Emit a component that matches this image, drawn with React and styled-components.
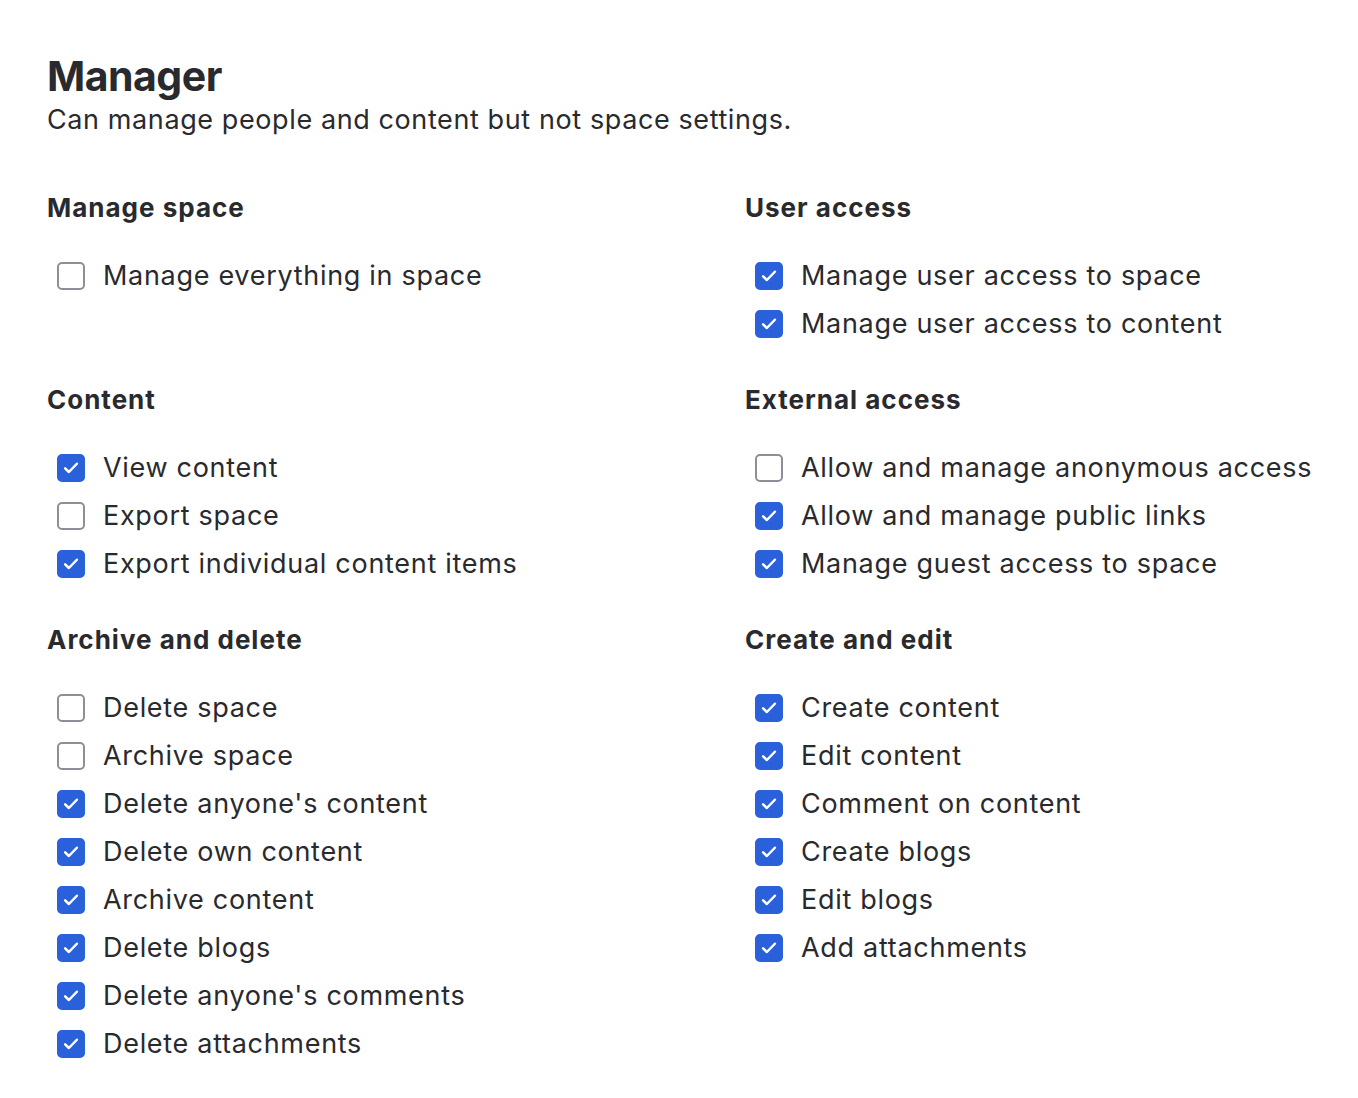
import React from 'react'
import styled, { createGlobalStyle } from 'styled-components'

const GlobalStyle = createGlobalStyle`
  body {
    margin: 0;
    background: #ffffff;
    font-family: Inter, "Noto Sans", sans-serif;
    color: #292a2e;
  }
`

const sections = [
  {
    title: 'Manage space',
    items: [['Manage everything in space', false]],
  },
  {
    title: 'User access',
    items: [
      ['Manage user access to space', true],
      ['Manage user access to content', true],
    ],
  },
  {
    title: 'Content',
    items: [
      ['View content', true],
      ['Export space', false],
      ['Export individual content items', true],
    ],
  },
  {
    title: 'External access',
    items: [
      ['Allow and manage anonymous access', false],
      ['Allow and manage public links', true],
      ['Manage guest access to space', true],
    ],
  },
  {
    title: 'Archive and delete',
    items: [
      ['Delete space', false],
      ['Archive space', false],
      ["Delete anyone's content", true],
      ['Delete own content', true],
      ['Archive content', true],
      ['Delete blogs', true],
      ["Delete anyone's comments", true],
      ['Delete attachments', true],
    ],
  },
  {
    title: 'Create and edit',
    items: [
      ['Create content', true],
      ['Edit content', true],
      ['Comment on content', true],
      ['Create blogs', true],
      ['Edit blogs', true],
      ['Add attachments', true],
    ],
  },
]

class Checkbox extends React.Component {
  render() {
    const { checked } = this.props
    return (
      <Box checked={ checked }>
        { checked && (
          <svg width="20" height="20" viewBox="0 0 16 16" fill="none">
            <path d="M3.3 8.3l3 2.9 6.4-6.6" stroke="#fff" strokeWidth="2" strokeLinecap="round" strokeLinejoin="round" />
          </svg>
        ) }
      </Box>
    )
  }
}

export default function App() {
  return (
    <Page>
      <GlobalStyle />
      <Title>Manager</Title>
      <Subtitle>Can manage people and content but not space settings.</Subtitle>
      <Grid>
        { sections.map(section => (
          <Section key={ section.title }>
            <Heading>{ section.title }</Heading>
            <List>
              { section.items.map(([label, checked]) => (
                <Row key={ label }>
                  <Checkbox checked={ checked } />
                  <Label>{ label }</Label>
                </Row>
              )) }
            </List>
          </Section>
        )) }
      </Grid>
    </Page>
  )
}

const Page = styled.div`
  padding: 52px 0 40px 47px;
`

const Title = styled.h1`
  margin: 0;
  font-size: 41px;
  line-height: 48px;
  font-weight: 700;
  letter-spacing: -0.5px;
`

const Subtitle = styled.p`
  margin: 2px 0 0;
  font-size: 27px;
  line-height: 36px;
  font-weight: 400;
  letter-spacing: 0.6px;
`

const Grid = styled.div`
  display: grid;
  grid-template-columns: 698px auto;
  row-gap: 36px;
  margin-top: 54px;
`

const Section = styled.section`
  display: flex;
  flex-direction: column;
`

const Heading = styled.h2`
  margin: 0;
  font-size: 26px;
  line-height: 32px;
  font-weight: 700;
  letter-spacing: 1px;
`

const List = styled.div`
  display: flex;
  flex-direction: column;
  margin-top: 28px;
`

const Row = styled.label`
  display: flex;
  align-items: center;
  height: 48px;
  padding-left: 10px;
  gap: 18px;
`

const Box = styled.span`
  box-sizing: border-box;
  width: 28px;
  height: 28px;
  flex: none;
  display: flex;
  align-items: center;
  justify-content: center;
  border-radius: 5px;
  border: 2px solid ${ p => (p.checked ? '#2a60d9' : '#8c8f97') };
  background: ${ p => (p.checked ? '#2a60d9' : '#fff') };
`

const Label = styled.span`
  font-size: 27px;
  line-height: 36px;
  letter-spacing: 0.7px;
`
